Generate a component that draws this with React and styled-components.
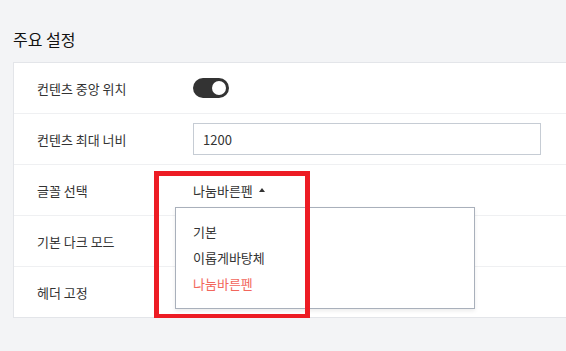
import React, { useState } from "react";
import styled, { createGlobalStyle } from "styled-components";

const GlobalStyle = createGlobalStyle`
    body {
        margin: 0;
        background: #f3f4f6;
        overflow: hidden;
        font-family: "Noto Sans CJK KR", "Noto Sans", sans-serif;
    }
`;

const fonts = ["기본", "이롭게바탕체", "나눔바른펜"];

function App() {
    const [centered, setCentered] = useState(true);
    const [font, setFont] = useState("나눔바른펜");

    return (
        <Page>
            <GlobalStyle />
            <Title>주요 설정</Title>
            <Card>
                <Row>
                    <Label>컨텐츠 중앙 위치</Label>
                    <Toggle $on={centered} onClick={() => setCentered(!centered)} />
                </Row>
                <Row>
                    <Label>컨텐츠 최대 너비</Label>
                    <Input defaultValue="1200" />
                </Row>
                <Row>
                    <Label>글꼴 선택</Label>
                    <Select>
                        <Trigger>
                            {font}
                            <Caret />
                        </Trigger>
                        <Menu>
                            {fonts.map(f => (
                                <MenuItem key={f} $active={f === font} onClick={() => setFont(f)}>
                                    {f}
                                </MenuItem>
                            ))}
                        </Menu>
                    </Select>
                </Row>
                <Row>
                    <Label>기본 다크 모드</Label>
                </Row>
                <Row $last>
                    <Label>헤더 고정</Label>
                </Row>
                <Highlight />
            </Card>
        </Page>
    );
}

const Page = styled.div`
    padding: 28px 0 0 13px;
`;

const Title = styled.h2`
    margin: 0 0 11px;
    font-size: 16px;
    font-weight: 400;
    line-height: 23px;
    color: #111;
`;

const Card = styled.div`
    position: relative;
    background: #fff;
    border: 1px solid #e3e5e9;
    border-right: none;
`;

const Row = styled.div`
    display: grid;
    grid-template-columns: 156px 1fr;
    align-items: center;
    height: 50px;
    padding-left: 23px;
    border-bottom: ${p => (p.$last ? "none" : "1px solid #eff0f2")};
`;

const Label = styled.div`
    font-size: 13px;
    color: #333;
`;

const Toggle = styled.div`
    position: relative;
    width: 36px;
    height: 20px;
    border-radius: 10px;
    background: ${p => (p.$on ? "#333" : "#ccc")};
    cursor: pointer;

    &::after {
        content: "";
        position: absolute;
        top: 3px;
        left: ${p => (p.$on ? "19px" : "3px")};
        width: 14px;
        height: 14px;
        border-radius: 50%;
        background: #fff;
    }
`;

const Input = styled.input`
    box-sizing: border-box;
    width: 348px;
    height: 32px;
    padding: 0 9px;
    border: 1px solid #c6ccd4;
    font-family: inherit;
    font-size: 13px;
    color: #333;
    outline: none;
`;

const Select = styled.div`
    position: relative;
    justify-self: start;
`;

const Trigger = styled.div`
    display: flex;
    align-items: center;
    gap: 6px;
    height: 20px;
    font-size: 13px;
    color: #333;
    cursor: pointer;
`;

const Caret = styled.span`
    width: 0;
    height: 0;
    border-left: 3.5px solid transparent;
    border-right: 3.5px solid transparent;
    border-bottom: 4px solid #333;
`;

const Menu = styled.div`
    position: absolute;
    top: calc(100% + 7px);
    left: -18px;
    z-index: 1;
    box-sizing: border-box;
    width: 300px;
    padding: 11px 0;
    background: #fff;
    border: 1px solid #a9b0bb;
    box-shadow: 0 2px 4px rgba(0, 0, 0, 0.08);
`;

const MenuItem = styled.div`
    height: 26px;
    line-height: 26px;
    padding-left: 17px;
    font-size: 13px;
    color: ${p => (p.$active ? "#f2665c" : "#333")};
    cursor: pointer;
`;

const Highlight = styled.div`
    position: absolute;
    left: 140px;
    top: 108px;
    z-index: 2;
    box-sizing: border-box;
    width: 156px;
    height: 148px;
    border: 5px solid #ed1c24;
    pointer-events: none;
`;

export default App;
